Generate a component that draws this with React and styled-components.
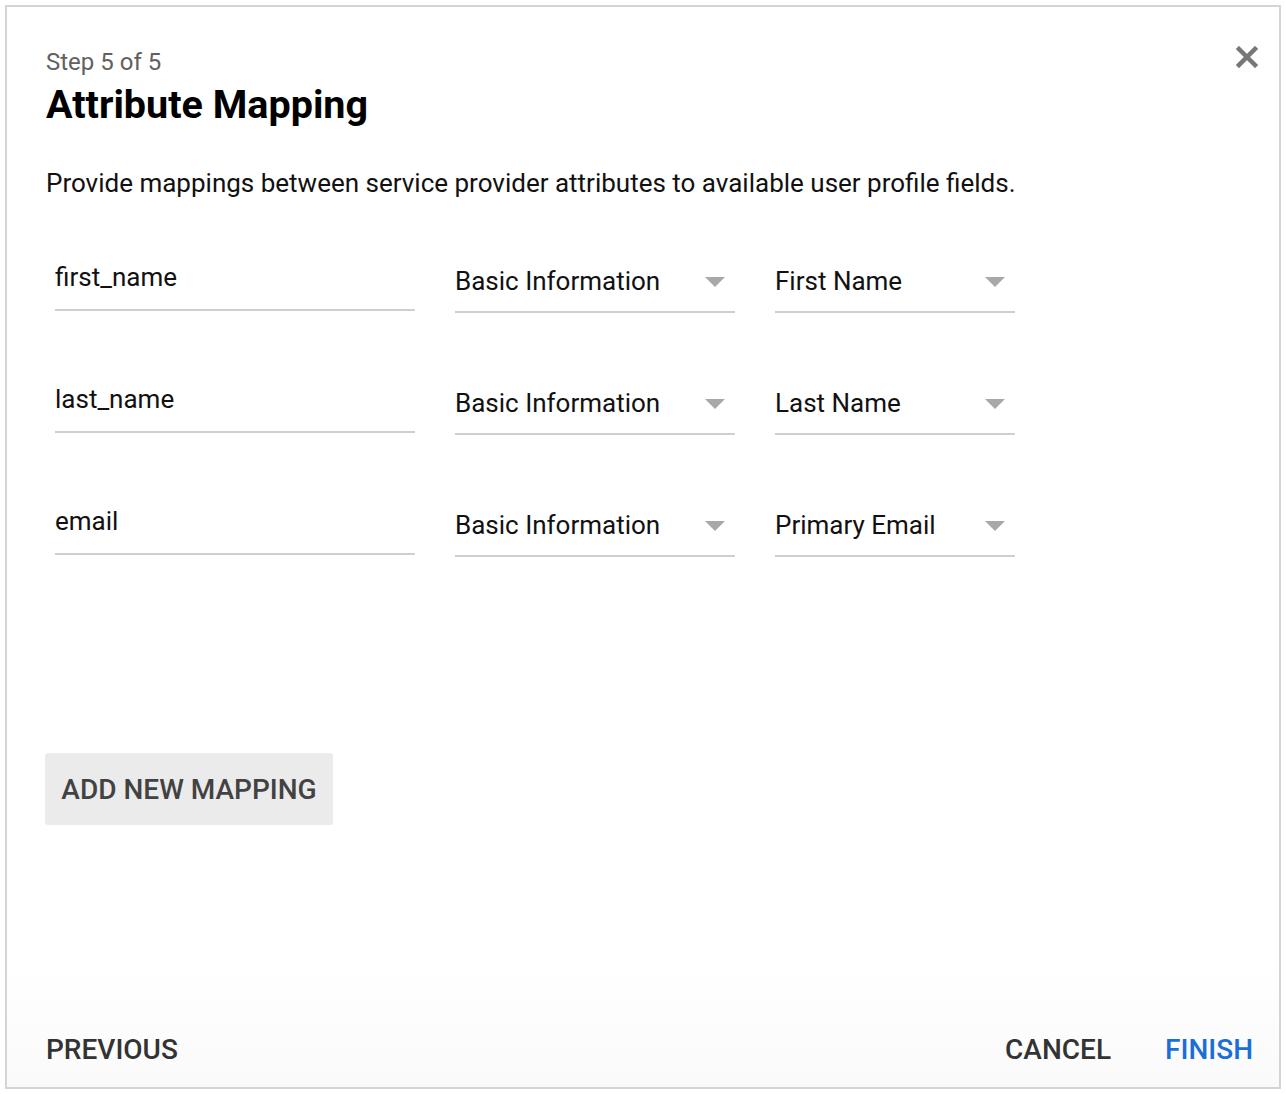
import React from "react";
import styled, { createGlobalStyle } from "styled-components";

const Global = createGlobalStyle`
  html, body { margin: 0; padding: 0; background: #fff; }
  body { font-family: Roboto, "Noto Sans", "Liberation Sans", sans-serif; }
  * { box-sizing: border-box; }
`;

const Frame = styled.div`
  position: relative;
  margin: 5px;
  width: 1276px;
  height: 1084px;
  border: 2px solid #d4d4d4;
  display: flex;
  flex-direction: column;
  padding: 0 26px 0 39px;
  background: linear-gradient(#fff 0, #fff 960px, #fafafa 100%);
`;

const Header = styled.div`
  padding-top: 40px;
  display: flex;
  flex-direction: column;
`;

const StepText = styled.div`
  font-size: 24px;
  line-height: 30px;
  color: #616161;
`;

const Title = styled.h1`
  margin: 6px 0 0;
  font-size: 39.5px;
  line-height: 44px;
  font-weight: 700;
  color: #000;
`;

const CloseButton = styled.button`
  position: absolute;
  top: 32px;
  right: 14px;
  width: 36px;
  height: 36px;
  border: none;
  background: transparent;
  padding: 0;
  display: flex;
  align-items: center;
  justify-content: center;
  cursor: pointer;
`;

const Description = styled.p`
  margin: 40px 0 0;
  font-size: 26px;
  line-height: 32px;
  color: #111;
`;

const Rows = styled.div`
  margin-top: 56px;
  padding-left: 9px;
  display: flex;
  flex-direction: column;
  gap: 64px;
`;

const Row = styled.div`
  display: flex;
  gap: 40px;
  align-items: flex-end;
`;

const TextField = styled.div`
  width: ${(p) => p.$w}px;
  height: 56px;
  border-bottom: 2px solid #cfcfcf;
  font-size: 26px;
  color: #111;
  line-height: 32px;
  padding-top: 6px;
  margin-bottom: 2px;
`;

const SelectField = styled.div`
  width: ${(p) => p.$w}px;
  height: 56px;
  border-bottom: 2px solid #cfcfcf;
  font-size: 26px;
  color: #111;
  line-height: 32px;
  padding-top: 8px;
  display: flex;
  justify-content: space-between;
`;

const Arrow = styled.span`
  width: 0;
  height: 0;
  margin: 12px 10px 0 0;
  border-left: 10px solid transparent;
  border-right: 10px solid transparent;
  border-top: 10px solid #a8a8a8;
`;

const AddButton = styled.button`
  margin-top: 196px;
  align-self: flex-start;
  margin-left: -1px;
  width: 288px;
  height: 72px;
  border: none;
  border-radius: 3px;
  background: #ebebeb;
  color: #424242;
  font-family: inherit;
  font-size: 28px;
  font-weight: 500;
  text-transform: uppercase;
  cursor: pointer;
`;

const Footer = styled.div`
  margin-top: auto;
  height: 80px;
  display: flex;
  align-items: flex-start;
  justify-content: space-between;
  padding-top: 27px;
`;

const FooterRight = styled.div`
  display: flex;
  gap: 54px;
`;

const TextButton = styled.button`
  border: none;
  background: transparent;
  padding: 0;
  font-family: inherit;
  font-size: 28px;
  line-height: 32px;
  font-weight: 500;
  text-transform: uppercase;
  color: ${(p) => (p.$primary ? "#1a6fd6" : "#333")};
  cursor: pointer;
`;

const rows = [
  { attr: "first_name", cat: "Basic Information", field: "First Name" },
  { attr: "last_name", cat: "Basic Information", field: "Last Name" },
  { attr: "email", cat: "Basic Information", field: "Primary Email" },
];

export default function App() {
  return (
    <>
      <Global />
      <Frame>
        <CloseButton aria-label="Close">
          <svg width="22" height="22" viewBox="0 0 22 22">
            <path d="M3 3 L19 19 M19 3 L3 19" stroke="#777" strokeWidth="4.5" strokeLinecap="square" />
          </svg>
        </CloseButton>
        <Header>
          <StepText>Step 5 of 5</StepText>
          <Title>Attribute Mapping</Title>
        </Header>
        <Description>
          Provide mappings between service provider attributes to available user profile fields.
        </Description>
        <Rows>
          {rows.map((r) => (
            <Row key={r.attr}>
              <TextField $w={360}>{r.attr}</TextField>
              <SelectField $w={280}>
                {r.cat}
                <Arrow />
              </SelectField>
              <SelectField $w={240}>
                {r.field}
                <Arrow />
              </SelectField>
            </Row>
          ))}
        </Rows>
        <AddButton>Add new mapping</AddButton>
        <Footer>
          <TextButton>Previous</TextButton>
          <FooterRight>
            <TextButton>Cancel</TextButton>
            <TextButton $primary>Finish</TextButton>
          </FooterRight>
        </Footer>
      </Frame>
    </>
  );
}
